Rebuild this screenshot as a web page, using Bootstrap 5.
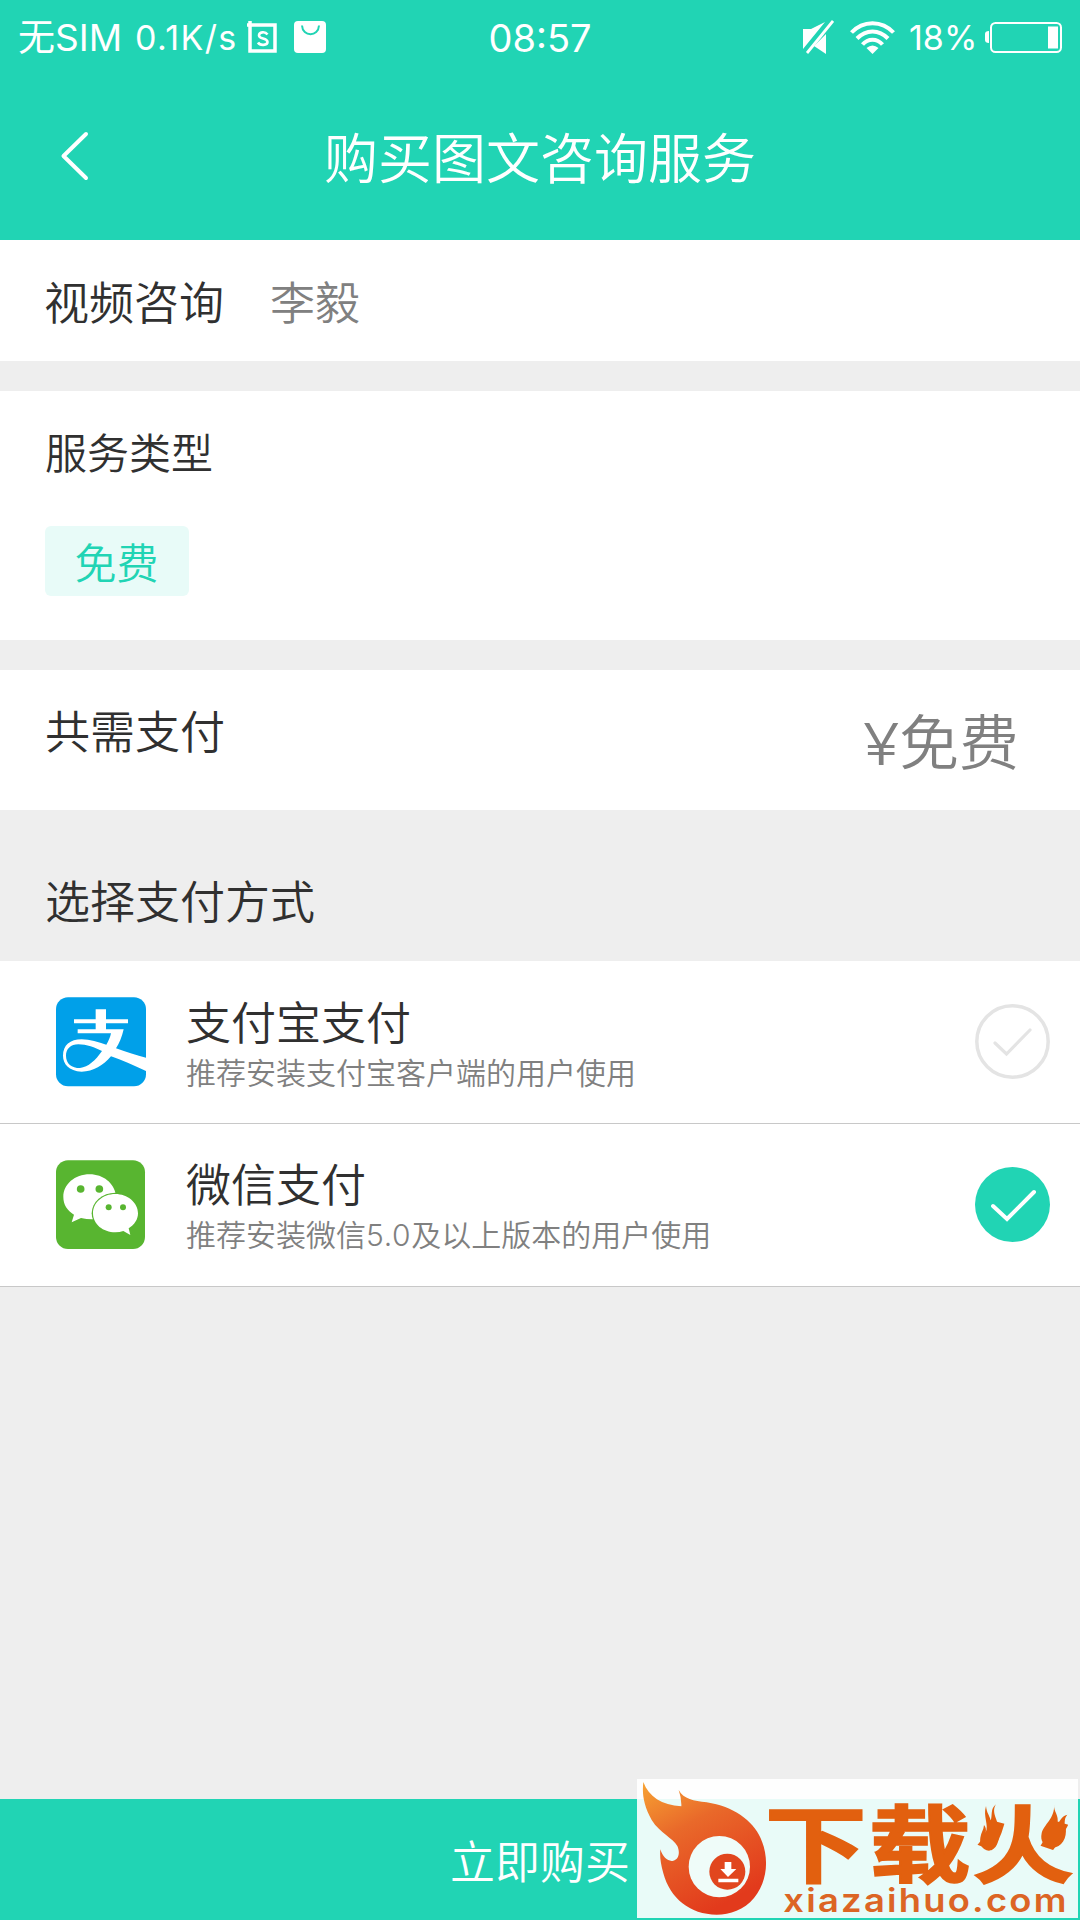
<!DOCTYPE html>
<html lang="zh-CN">
<head>
<meta charset="utf-8">
<meta name="viewport" content="width=device-width, initial-scale=1">
<title>购买图文咨询服务</title>
<link rel="stylesheet" href="https://cdn.jsdelivr.net/npm/bootstrap@5.3.0/dist/css/bootstrap.min.css">
<style>
:root{--teal:#21d4b4;--ink:#303030;--soft:#808080;--ground:#eee}
body{font-family:"Noto Sans CJK SC",sans-serif;font-weight:350;background:var(--ground);color:var(--ink);font-size:45px;line-height:60px}
.screen{width:1080px;height:1920px}
.teal-bg{background:var(--teal)}
.statusbar{height:76px;line-height:76px;font-family:Inter,"Noto Sans CJK SC",sans-serif}
.statusbar span{white-space:nowrap}
.st-sim{font-size:37px;width:117px;font-weight:400}
.st-rate{font-size:34px;width:112px;font-weight:400;letter-spacing:1.4px}
.st-clock{font-size:38px;font-weight:400}
.st-pct{font-size:34px;width:76px;font-weight:400}
.statusbar svg{position:relative;top:-1px}
.titlebar{height:164px}
.titlebar h1{font-size:54px;line-height:70px;font-weight:350}
.doctor{height:121px;padding:0 45px 0 44px;margin-bottom:30px}
.doctor .who{margin-left:46px}
.soft{color:var(--soft)}
.service{height:249px;padding:30px 45px 0;margin-bottom:30px;font-size:42px}
.tag{width:144px;height:70px;line-height:70px;border-radius:6px;background:#e8fbf8;color:var(--teal);margin-top:45px;text-indent:-1px}
.total{height:140px;padding:30px 61px 0 45px}
.price{font-size:60px;line-height:78px}
.yen{display:inline-block;font-family:Inter,sans-serif;font-weight:300;font-size:58px;transform:scaleX(1.16);transform-origin:right}
.choose{height:151px;padding:60px 45px 0}
.payrow{height:163px;padding:0 30px 0 56px;border:0;border-bottom:1px solid #c8c8c8;border-radius:0;color:var(--ink)}
.payrow .names{margin-left:40px;padding-top:2px}
.payrow .pname{line-height:56px}
.payrow .hint{font-size:30px;line-height:44px}
.payrow .pick{margin-bottom:1px}
.hint .num{font-family:Inter,sans-serif;font-weight:300;letter-spacing:.7px}
.buy{height:121px;font-size:45px;font-weight:350;line-height:121px}
.stamp{position:absolute;right:2px;bottom:2px;background:rgba(255,255,255,.9)}
</style>
</head>
<body>
<main class="screen position-relative d-flex flex-column overflow-hidden">
  <header class="teal-bg text-white">
    <div class="statusbar row g-0">
      <div class="col d-flex align-items-center" style="padding-left:18px">
        <span class="st-sim">无SIM</span>
        <span class="st-rate">0.1K/s</span>
        <svg width="31" height="33" viewBox="0 0 31 33" fill="none" stroke="#fff" stroke-width="3.5"><path d="M3 0V30H28V4H0"/><path d="M20.500 13.500C18 10 12 11 12 14.500C12 18.500 20.500 16.500 20.500 21C20.500 24.500 13 25 11 21.500" stroke-width="2.600"/></svg>
        <svg class="ms-3" width="33" height="33" viewBox="0 0 33 33"><rect x="0" y="0" width="32" height="32" rx="4" fill="#fff"/><path d="M8 4.500C8.500 16 24.500 16 25 4.500" fill="none" stroke="#21d4b4" stroke-width="2"/></svg>
      </div>
      <div class="col-auto st-clock">08:57</div>
      <div class="col d-flex align-items-center justify-content-end" style="padding-right:18px">
        <svg width="32" height="34" viewBox="0 0 32 34"><path d="M1 9H9L23 2L1 29ZM24 14V34L12 26Z" fill="#fff"/><path d="M29 1L3 32" stroke="#21d4b4" stroke-width="4.500"/><path d="M31 1L5 33" stroke="#fff" stroke-width="2.800"/></svg>
        <svg style="margin:0 14px 0 16px" width="45" height="33" viewBox="0 0 45 33" fill="none" stroke="#fff" stroke-width="4"><path d="M1.500 11.500C13-1 32-1 43.500 11.500M7 17.500C16 8 29 8 38 17.500M12.500 23.500C18 17 27 17 32.500 23.500"/><path d="M16.500 27Q22.500 22 28.500 27L22.500 33Z" fill="#fff" stroke="none"/></svg>
        <span class="st-pct">18%</span>
        <svg width="77" height="31" viewBox="0 0 77 31"><rect x="6" y="1" width="70" height="29" rx="4.500" fill="none" stroke="#fff" stroke-width="2"/><rect x="63" y="4.500" width="10" height="22" fill="#fff"/><path d="M4 9Q0 9 0 12V18Q0 21 4 21Z" fill="#fff"/></svg>
      </div>
    </div>
    <div class="titlebar position-relative text-center">
      <svg class="position-absolute" style="left:58px;top:54px" width="32" height="52" viewBox="0 0 32 52" fill="none" stroke="#fff" stroke-width="4" stroke-linecap="round" stroke-linejoin="round"><path d="M28 4L5.500 26L28 48"/></svg>
      <h1 class="m-0" style="padding-top:45px">购买图文咨询服务</h1>
    </div>
  </header>

  <section class="doctor bg-white d-flex align-items-center"><span>视频咨询</span><span class="who soft">李毅</span></section>

  <section class="service bg-white">
    <div>服务类型</div>
    <div class="tag text-center">免费</div>
  </section>

  <section class="total bg-white d-flex justify-content-between"><span>共需支付</span><span class="price soft"><span class="yen">¥</span>免费</span></section>
  <div class="choose">选择支付方式</div>

  <div class="list-group rounded-0">
    <div class="list-group-item payrow d-flex align-items-center">
      <svg width="90" height="90" viewBox="78 80 270 270"><rect x="78" y="81" width="270" height="267" rx="36" fill="#00a0e9"/><path fill="#fff" fill-rule="evenodd" d="M197 117H228V147H294V159H228V177H281C276 200 267 220 258 234C290 246 320 255 348 262V302C310 285 275 268 243 258C220 285 190 304 155 304C116 302 99 280 99 256C99 225 120 207 155 207C180 207 205 215 229 223C236 211 241 200 243 189H143V177H197V159H132V147H197ZM108 256C108 280 125 293 150 293C175 290 197 270 216 242C195 232 170 222 145 222C122 222 108 236 108 256Z"/></svg>
      <div class="names flex-grow-1"><div class="pname">支付宝支付</div><div class="hint soft">推荐安装支付宝客户端的用户使用</div></div>
      <svg class="pick" width="75" height="75" viewBox="0 0 75 75" fill="none" stroke="#e4e4e4" stroke-linecap="round"><circle cx="37.500" cy="37.500" r="35.700" stroke-width="3.500"/><path d="M20 39L31.500 50L55 26" stroke-width="3.200"/></svg>
    </div>
    <div class="list-group-item payrow d-flex align-items-center">
      <svg width="90" height="90" viewBox="78 569 270 270"><rect x="78" y="570" width="267" height="266" rx="36" fill="#58b530"/><path d="M179 612C134 612 100 642 100 680C100 703 112 721 132 733L125 756L153 743Q180 749 208 745L258 675C252 638 220 612 179 612Z" fill="#fff"/><ellipse cx="256" cy="729" rx="71" ry="62" fill="#58b530"/><path d="M256 671C218 671 189 697 189 729C189 762 219 786 256 786Q269 786 280 782L301 794L296 774C314 763 324 747 324 729C324 696 292 671 256 671Z" fill="#fff"/><g fill="#58b530"><circle cx="152" cy="656" r="11.500"/><circle cx="208" cy="656" r="11.500"/><circle cx="236" cy="711" r="9"/><circle cx="279" cy="711" r="9"/></g></svg>
      <div class="names flex-grow-1"><div class="pname">微信支付</div><div class="hint soft">推荐安装微信<span class="num">5.0</span>及以上版本的用户使用</div></div>
      <svg class="pick" width="75" height="75" viewBox="0 0 75 75" fill="none" stroke="#fff" stroke-linecap="round"><circle cx="37.500" cy="37.500" r="37.500" fill="#21d4b4" stroke="none"/><path d="M18 39L32 52L59 25" stroke-width="4"/></svg>
    </div>
  </div>

  <button type="button" class="btn buy teal-bg text-white rounded-0 border-0 p-0 mt-auto">立即购买</button>

  <!-- Download site badge, drawn at three units to the pixel -->
  <svg class="stamp" width="441" height="139" viewBox="51 27 1323 417">
    <defs><linearGradient id="flame" x1="0" y1="0" x2=".5" y2="1"><stop offset="0" stop-color="#f7a333"/><stop offset=".4" stop-color="#e9692a"/><stop offset="1" stop-color="#e23a1c"/></linearGradient></defs>
    <path fill="url(#flame)" d="M70 36C86 80 125 105 184 109Q185 85 176 60C192 88 220 92 260 97C340 110 398 150 422 205C449 265 442 335 402 384C372 420 330 434 290 434C210 434 150 385 130 310C122 280 119 260 121 238C128 262 145 276 160 272C178 268 180 245 172 228C160 205 120 190 95 150C70 105 66 70 70 36Z"/>
    <circle cx="298" cy="290" r="92" fill="#effcf9"/><circle cx="322" cy="305" r="54" fill="#e1461e"/>
    <path fill="#fff" d="M314 276H334V297H349L324 321L301 297H314ZM295 326H355V337H295Z"/>
    <text transform="translate(0 319) scale(1 .83)" x="434 746 1056" y="0" font-size="306" font-weight="700" fill="#e2600f" stroke="#e2600f" stroke-width="6" font-family="Inter,Noto Sans CJK SC,sans-serif">下载火</text>
    <g fill="#e2600f"><path d="M1128 103C1112 128 1135 150 1137 180C1140 215 1128 240 1107 242C1086 240 1078 222 1081 203C1083 188 1091 180 1092 165C1098 172 1099 181 1097 188C1108 165 1088 140 1098 108C1100 130 1110 138 1112 152C1118 135 1110 118 1128 103Z"/><path d="M1302 103C1300 125 1318 137 1312 160C1322 155 1322 138 1342 134C1328 150 1340 162 1327 185C1333 182 1335 178 1337 172C1342 205 1325 232 1297 234C1270 230 1260 212 1265 190C1270 165 1306 145 1302 103Z"/></g>
    <text x="490" y="425" font-size="98" font-weight="600" fill="#dc6524" font-family="Inter,sans-serif" textLength="856" lengthAdjust="spacingAndGlyphs" letter-spacing="6">xiazaihuo.com</text>
  </svg>
</main>
<script src="https://cdn.jsdelivr.net/npm/bootstrap@5.3.0/dist/js/bootstrap.bundle.min.js"></script>
</body>
</html>
